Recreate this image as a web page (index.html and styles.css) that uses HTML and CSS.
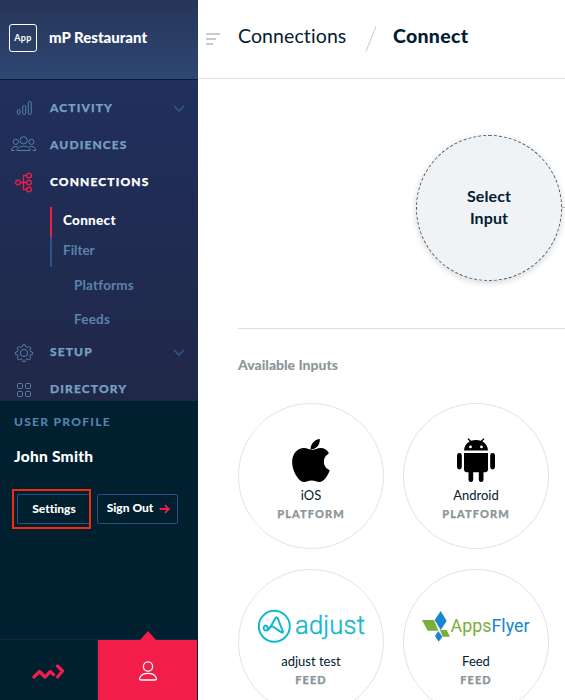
FILE: index.html
```html
<!DOCTYPE html>
<html lang="en">
<head>
<meta charset="utf-8">
<title>Connections / Connect</title>
<link rel="stylesheet" href="styles.css">
</head>
<body>
<div class="app">
  <aside class="sidebar">
    <header class="brand">
      <span class="brand-badge">App</span>
      <span class="brand-name">mP Restaurant</span>
    </header>
    <nav class="nav">
      <a class="nav-item">
        <svg class="nav-icon" viewBox="0 0 48 37"><rect x="17.500" y="19.500" width="2.500" height="5" rx="1.200"/><rect x="22.700" y="15.500" width="3" height="9" rx="1.400"/><rect x="28.300" y="11.500" width="3" height="13" rx="1.400"/></svg>
        <span class="label">ACTIVITY</span>
        <svg class="chevron" viewBox="0 0 12 8"><path d="M1 1l5 5 5-5"/></svg>
      </a>
      <a class="nav-item">
        <svg class="nav-icon" viewBox="0 0 48 37"><circle cx="23.600" cy="13.300" r="3.600"/><circle cx="15.800" cy="14.800" r="2.600"/><circle cx="31.400" cy="14.800" r="2.600"/><path d="M17 23.500c0-2.500 2.500-4.300 6.600-4.300s6.600 1.800 6.600 4.300zM14.500 23.500h-3c0-2.500 1.500-4 4.300-4l2 .3M32.700 23.500h3c0-2.500-1.500-4-4.300-4l-2 .3"/></svg>
        <span class="label">AUDIENCES</span>
      </a>
      <a class="nav-item active">
        <svg class="nav-icon" viewBox="0 0 48 37"><circle cx="18" cy="18.500" r="2.300"/><circle cx="29" cy="11.500" r="2.300"/><circle cx="29" cy="18.500" r="2.300"/><circle cx="29" cy="25.500" r="2.300"/><path d="M20.300 18.500h6.400M26.700 11.500h-3.200v14h3.200"/></svg>
        <span class="label">CONNECTIONS</span>
      </a>
      <div class="subnav">
        <a class="sub current">Connect</a>
        <a class="sub">Filter</a>
      </div>
      <div class="subsub">
        <a class="platforms">Platforms</a>
        <a class="feeds">Feeds</a>
      </div>
      <a class="nav-item">
        <svg class="nav-icon" viewBox="0 0 48 37"><circle cx="24" cy="19" r="3.600"/><path d="M22.800 11.500h2.400l.5 1.900 1.600.7 1.800-1 1.700 1.700-1 1.800.7 1.600 1.900.5v2.400l-1.900.5-.7 1.600 1 1.800-1.700 1.700-1.800-1-1.600.7-.5 1.900h-2.400l-.5-1.900-1.600-.7-1.800 1-1.700-1.700 1-1.800-.7-1.600-1.900-.5v-2.400l1.900-.5.7-1.600-1-1.800 1.700-1.700 1.800 1 1.600-.7z" transform="translate(0 -.7)"/></svg>
        <span class="label">SETUP</span>
        <svg class="chevron" viewBox="0 0 12 8"><path d="M1 1l5 5 5-5"/></svg>
      </a>
      <a class="nav-item">
        <svg class="nav-icon" viewBox="0 0 48 37"><rect x="17.500" y="12.500" width="5" height="5" rx="1"/><rect x="25.500" y="12.500" width="5" height="5" rx="1"/><rect x="17.500" y="20.500" width="5" height="5" rx="1"/><rect x="25.500" y="20.500" width="5" height="5" rx="1"/></svg>
        <span class="label">DIRECTORY</span>
      </a>
    </nav>
    <section class="profile">
      <div class="profile-title">USER PROFILE</div>
      <div class="profile-name">John Smith</div>
      <div class="profile-actions">
        <div class="highlight"><a class="btn settings">Settings</a></div>
        <a class="btn signout"><span>Sign Out</span><svg class="arrow" viewBox="0 0 11 10"><path d="M.5 5h9M6 1.200L9.800 5 6 8.800"/></svg></a>
      </div>
    </section>
    <footer class="tabs">
      <a class="tab"><svg class="mark" viewBox="0 0 34 16"><path d="M2 13l5.500-5.500 5.500 5.500 5.500-5.500 3 3.200M25.500 2l5 5-5 6"/></svg></a>
      <a class="tab selected"><svg class="person" viewBox="0 0 20 20"><circle cx="10" cy="5.500" r="4.600"/><path d="M3 19c-1.500 0-1.700-1-1-2.600C3.200 13.700 6 12.400 10 12.400s6.800 1.300 8 4c.7 1.600.5 2.600-1 2.600z"/></svg></a>
    </footer>
  </aside>
  <main class="main">
    <header class="topbar">
      <svg class="menu" viewBox="0 0 14 12"><path d="M0 1h14M0 6h10M0 11h7"/></svg>
      <span class="crumb">Connections</span>
      <svg class="slash" viewBox="0 0 12 26"><path d="M11 .5L1 25.500"/></svg>
      <span class="crumb crumb-now">Connect</span>
    </header>
    <section class="stage">
      <div class="select-input"><span>Select</span><span>Input</span></div>
      <div class="wire"></div>
    </section>
    <section class="inputs">
      <h2>Available Inputs</h2>
      <div class="grid">
        <div class="card">
          <svg class="logo" viewBox="0 0 120 48"><path transform="translate(-.5 -.5)" d="M69.300 2.500c.4 3.300-1 6-3 8.100-1.900 1.900-4.300 2.600-6.200 2.400-.3-3.100 1-5.600 3-7.600 1.700-1.700 4.200-2.800 6.200-2.900zM78 17.300c-3 1.800-4.600 4.500-4.600 8 0 3.900 2.300 7 5.800 8.400-.9 3-2.500 5.800-4.500 8.400-1.800 2.300-3.600 3.400-5.900 3.400-2.800 0-4-1.500-7.600-1.500s-4.900 1.500-7.500 1.500c-2.500 0-4.400-1.400-6.300-3.900-6.700-8.500-7.800-20.700-2-26.500 2.300-2.400 5.200-3.600 8.200-3.500 3.200.1 5.400 1.900 8.100 1.900s4.900-1.900 8.700-1.900c3.100 0 5.800 1.600 7.600 4.200z"/></svg>
          <span class="card-name">iOS</span><span class="card-kind">PLATFORM</span>
        </div>
        <div class="card">
          <svg class="logo" viewBox="0 0 120 48"><path transform="translate(0 -.7)" d="M48 14.300c.1-4.100 2.200-7.400 5.700-9.200L51.500 2.800l1-.8 2.600 2.500a16 16 0 0 1 9.800 0L67.500 2l1 .8-2.200 2.300c3.500 1.800 5.600 5.100 5.700 9.200zM54.500 9.200a1.400 1.400 0 1 0 0 2.800 1.400 1.400 0 0 0 0-2.800zm11 0a1.400 1.400 0 1 0 0 2.800 1.400 1.400 0 0 0 0-2.800z"/><path d="M48 16h24v16.200a3 3 0 0 1-3 3h-1.500v7.500a2.300 2.300 0 0 1-4.700 0v-7.500h-5.600v7.500a2.300 2.300 0 0 1-4.700 0v-7.500H51a3 3 0 0 1-3-3z"/><rect x="41" y="16" width="4.800" height="16.500" rx="2.400"/><rect x="74.200" y="16" width="4.800" height="16.500" rx="2.400"/></svg>
          <span class="card-name">Android</span><span class="card-kind">PLATFORM</span>
        </div>
        <div class="card">
          <svg class="logo" viewBox="0 0 120 48"><g class="adjust-mark"><circle cx="23.300" cy="23.300" r="15.500"/><path d="M16.500 25.300c.3-2-1-3.200-2.600-2.600-2 .8-1.600 4.600 1 4.900 2.300.2 3.600-2 4.600-3.800l5-8.600q1.300-1.700 2.200.1l5.200 13q.4 1.800-1.300 1l-8.800-5.800q-2.600-.8-4.600 3.200"/></g><text class="adjust-word" x="44" y="31" textLength="70">adjust</text></svg>
          <span class="card-name">adjust test</span><span class="card-kind">FEED</span>
        </div>
        <div class="card">
          <svg class="logo" viewBox="0 0 120 48"><path class="green" d="M6 17h12l4.300 10.700H11.700zM24 27h6.700l3.300 6.700h-7.300z"/><path class="blue" d="M24.700 8l6 10-6 9-6-10zM22.300 28l4 5.700-3.600 5-3.700-5.700z"/><text class="flyer-word" x="34.500" y="29.300" textLength="79" lengthAdjust="spacingAndGlyphs"><tspan class="green">Apps</tspan><tspan class="blue">Flyer</tspan></text></svg>
          <span class="card-name">Feed</span><span class="card-kind">FEED</span>
        </div>
      </div>
    </section>
  </main>
</div>
</body>
</html>
```
FILE: styles.css
```css
* { box-sizing: border-box; }
body { margin: 0; font-family: Lato, "Open Sans", sans-serif; font-variant-ligatures: none; color: #03202f; background: #fff; }
svg { display: block; flex: none; }
.app { display: flex; width: 565px; height: 700px; overflow: hidden; }

.sidebar { display: flex; flex-direction: column; flex: none; width: 198px; background: #00202f; }
.brand { display: flex; align-items: center; gap: 12px; height: 80px; padding: 0 0 4px 9px; border-bottom: 1px solid #031f38; background: linear-gradient(#263559, #2f4773); }
.brand-badge { width: 28px; height: 28px; border: 1px solid #fff; border-radius: 3px; color: #fff; font-size: 9px; font-weight: 700; line-height: 25px; text-align: center; letter-spacing: .3px; }
.brand-name { margin-top: -2px; color: #fff; font-size: 15px; font-weight: 900; }

.nav { height: 321px; padding-top: 10px; background: linear-gradient(#202f5c, #202848); }
.nav-item { display: flex; align-items: center; height: 37px; color: #779fc2; }
.nav-icon { width: 48px; height: 37px; margin-right: 2px; fill: none; stroke: #5680a5; stroke-width: 1; }
.label { flex: 1; margin-top: -2px; font-size: 12px; font-weight: 900; line-height: 16px; letter-spacing: 1.120px; -webkit-text-stroke: .25px currentColor; }
.chevron { width: 12px; height: 8px; margin-right: 13px; fill: none; stroke: #315783; stroke-width: 1.600; }
.active { color: #fff; }
.active .nav-icon { stroke: #f21d49; stroke-width: 1.300; }
.subnav { margin: 6px 0 0 50px; }
.sub { display: block; height: 30px; padding-left: 11px; border-left: 2px solid #285587; color: #5c82ad; font-size: 13.500px; font-weight: 700; line-height: 27px; }
.current { border-color: #f21d49; color: #fff; font-weight: 900; letter-spacing: .3px; }
.subsub { display: flex; flex-direction: column; padding-left: 74px; color: #5c82ad; font-size: 13.500px; font-weight: 700; letter-spacing: .2px; }
.platforms { height: 36px; line-height: 37px; }
.feeds { height: 31px; line-height: 33px; }

.profile { flex: 1; padding: 13px 0 0 12px; color: #fff; }
.profile-title { padding-left: 2px; color: #5680ad; font-size: 12px; font-weight: 900; line-height: 16px; letter-spacing: 1.280px; }
.profile-name { padding: 16px 0 1px 2px; font-size: 15.500px; font-weight: 900; line-height: 20px; letter-spacing: .25px; }
.profile-actions { display: flex; align-items: center; gap: 6px; margin-top: 22px; }
.highlight { width: 79px; height: 40px; padding: 3px 0 0 3px; border: 2px solid #f22b0d; }
.btn { display: flex; align-items: center; justify-content: center; height: 30px; padding-bottom: 2px; border: 1px solid #24517f; border-radius: 2px; font-size: 12px; font-weight: 900; }
.settings { padding-left: 1px; border-right: 0; border-radius: 2px 0 0 2px; }
.signout { width: 81px; gap: 6px; padding-left: 2px; margin-top: -1px; }
.arrow { width: 11px; height: 10px; margin-top: 2px; fill: none; stroke: #f21d49; stroke-width: 1.800; }
.tabs { display: flex; height: 61px; border-top: 1px solid #0a2a45; }
.tab { display: flex; align-items: center; justify-content: center; width: 98px; border-right: 1px solid #0a2a45; }
.selected { position: relative; width: 99px; border: 0; background: #f21d49; }
.selected::before { content: ""; position: absolute; left: 42px; top: -9px; border: 8px solid transparent; border-top: 0; border-bottom: 9px solid #f21d49; }
.mark { width: 34px; height: 16px; margin-top: 3px; fill: none; stroke: #f21d49; stroke-width: 3.200; stroke-linecap: round; stroke-linejoin: round; }
.person { width: 20px; height: 20px; margin-top: 2px; fill: none; stroke: #fff; stroke-width: 1.300; }

.main { flex: 1; min-width: 0; }
.topbar { display: flex; align-items: center; height: 79px; padding: 0 0 6px 8px; border-bottom: 1px solid #dcdfe0; }
.menu { width: 14px; height: 12px; margin: 5px 18px 0 0; stroke: #c5cdce; stroke-width: 2; }
.crumb { width: 110px; font-size: 19.500px; line-height: 26px; letter-spacing: .1px; }
.crumb-now { font-weight: 900; letter-spacing: .3px; }
.slash { width: 12px; height: 26px; margin: 5px 16px 0 17px; fill: none; stroke: #c5cdce; stroke-width: 1; }
.stage { display: flex; height: 250px; margin-left: 40px; padding: 56px 0 0 178px; border-bottom: 1px solid #dcdfe0; }
.select-input { display: flex; flex: none; flex-direction: column; align-items: center; justify-content: center; width: 146px; height: 146px; padding-bottom: 3px; border: 1px dashed #49606f; border-radius: 50%; background: #eff3f6; box-shadow: 0 2px 6px rgba(0, 0, 0, .16); font-size: 16px; font-weight: 700; line-height: 22px; letter-spacing: .1px; }
.wire { flex: 1; height: 1px; margin-top: 72px; background: #aab4b9; }
.inputs { padding-left: 40px; }
h2 { margin: 0; padding-top: 27px; color: #8c9699; font-size: 14px; font-weight: 900; line-height: 18px; }
.grid { display: grid; grid-template-columns: 146px 146px; gap: 20px 19px; margin-top: 29px; }
.card { display: flex; flex-direction: column; align-items: center; height: 146px; padding-top: 33px; border: 1px solid #e1e3e4; border-radius: 50%; }
.logo { width: 120px; height: 48px; }
.card-name { font-size: 13px; line-height: 18px; margin-top: 1px; }
.card-kind { margin-top: 1px; color: #8c9699; font-size: 11px; font-weight: 900; line-height: 18px; letter-spacing: 1.050px; -webkit-text-stroke: .25px currentColor; }
.adjust-mark { fill: none; stroke: #13b7ce; stroke-width: 2; stroke-linejoin: round; stroke-linecap: round; }
.adjust-word { fill: #13b7ce; font: 300 25.500px Roboto, sans-serif; stroke: #13b7ce; stroke-width: .4; }
.flyer-word { font: 400 19px Roboto, sans-serif; }
.green { fill: #7aae3b; }
.blue { fill: #1787cf; }
```
